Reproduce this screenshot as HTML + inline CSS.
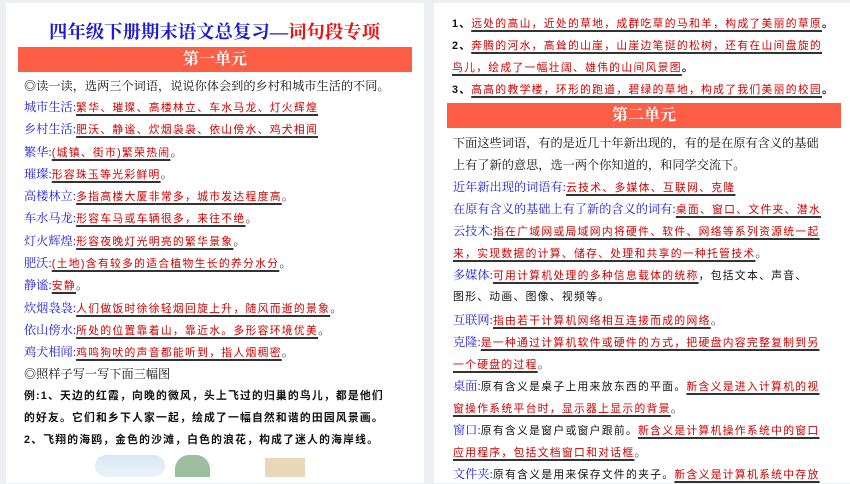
<!DOCTYPE html>
<html><head><meta charset="utf-8"><style>
*{margin:0;padding:0;box-sizing:border-box}
body{width:850px;height:477px;background:#eeeff3;position:relative;overflow:hidden;font-family:"Liberation Serif","Noto Serif CJK SC",serif;}
.pg{position:absolute;top:3px;background:#fff;height:480px}
.l{position:absolute;white-space:nowrap;font-size:12.2px;line-height:18px;color:#111}
.b{color:#1c1ce0}
.r{color:#d00000;font-family:"Liberation Sans","Noto Sans CJK SC",sans-serif;font-size:10.8px;letter-spacing:1.3px;text-decoration:underline;text-decoration-color:#333;text-underline-offset:3px;text-decoration-thickness:1.5px}
.k{font-family:"Liberation Sans","Noto Sans CJK SC",sans-serif;font-size:10.8px;letter-spacing:1.2px;font-weight:bold}
.n{font-family:"Liberation Sans","Noto Sans CJK SC",sans-serif;font-size:10.8px;letter-spacing:1.3px}
.bar{position:absolute;background:#ff5e46;color:#fff;font-weight:bold;font-size:16px;text-align:center;line-height:25px;height:25px}
</style></head><body>
<div class="pg" style="left:6px;width:418px"></div>
<div class="pg" style="left:434px;width:416px"></div>

<div class="l" style="left:49px;top:19px;font-size:18.4px;line-height:26px;font-weight:bold;color:#1a1ad8">四年级下册期末语文总复习—<span style="color:#f01010">词句段专项</span></div>
<div class="bar" style="left:18px;top:47px;width:394px">第一单元</div>
<div class="l" style="left:24px;top:77px">◎读一读，选两三个词语，说说你体会到的乡村和城市生活的不同。</div>
<div class="l" style="left:24px;top:98px"><span class="b">城市生活:</span><span class="r">繁华、璀璨、高楼林立、车水马龙、灯火辉煌</span></div>
<div class="l" style="left:24px;top:120px"><span class="b">乡村生活:</span><span class="r">肥沃、静谧、炊烟袅袅、依山傍水、鸡犬相闻</span></div>
<div class="l" style="left:24px;top:143px"><span class="b">繁华:</span><span class="r">(城镇、街市)繁荣热闹</span>。</div>
<div class="l" style="left:24px;top:165px"><span class="b">璀璨:</span><span class="r">形容珠玉等光彩鲜明</span>。</div>
<div class="l" style="left:24px;top:187px"><span class="b">高楼林立:</span><span class="r">多指高楼大厦非常多，城市发达程度高</span>。</div>
<div class="l" style="left:24px;top:209px"><span class="b">车水马龙:</span><span class="r">形容车马或车辆很多，来往不绝</span>。</div>
<div class="l" style="left:24px;top:232px"><span class="b">灯火辉煌:</span><span class="r">形容夜晚灯光明亮的繁华景象</span>。</div>
<div class="l" style="left:24px;top:254px"><span class="b">肥沃:</span><span class="r">(土地)含有较多的适合植物生长的养分水分</span>。</div>
<div class="l" style="left:24px;top:276px"><span class="b">静谧:</span><span class="r">安静</span>。</div>
<div class="l" style="left:24px;top:299px"><span class="b">炊烟袅袅:</span><span class="r">人们做饭时徐徐轻烟回旋上升，随风而逝的景象</span>。</div>
<div class="l" style="left:24px;top:321px"><span class="b">依山傍水:</span><span class="r">所处的位置靠着山，靠近水。多形容环境优美</span>。</div>
<div class="l" style="left:24px;top:343px"><span class="b">鸡犬相闻:</span><span class="r">鸡鸣狗吠的声音都能听到，指人烟稠密</span>。</div>
<div class="l" style="left:24px;top:365px">◎照样子写一写下面三幅图</div>
<div class="l k" style="left:24px;top:387px">例:1、天边的红霞，向晚的微风，头上飞过的归巢的鸟儿，都是他们</div>
<div class="l k" style="left:24px;top:409px">的好友。它们和乡下人家一起，绘成了一幅自然和谐的田园风景画。</div>
<div class="l k" style="left:24px;top:431px">2、飞翔的海鸥，金色的沙滩，白色的浪花，构成了迷人的海岸线。</div>
<div style="position:absolute;left:95px;top:455px;width:70px;height:22px;background:linear-gradient(#cfe0f0,#e8f0f8);border-radius:20px;opacity:.8"></div>
<div style="position:absolute;left:175px;top:455px;width:35px;height:22px;background:#9dbfa0;border-radius:14px 14px 0 0"></div>
<div style="position:absolute;left:265px;top:458px;width:40px;height:19px;background:#e8d8b8"></div>

<div class="l k" style="left:452px;top:15px">1、<span class="r" style="font-weight:normal">远处的高山，近处的草地，成群吃草的马和羊，构成了美丽的草原</span>。</div>
<div class="l k" style="left:452px;top:37px">2、<span class="r" style="font-weight:normal">奔腾的河水，高耸的山崖，山崖边笔挺的松树，还有在山间盘旋的</span></div>
<div class="l k" style="left:452px;top:59px"><span class="r" style="font-weight:normal">鸟儿，绘成了一幅壮阔、雄伟的山间风景图</span>。</div>
<div class="l k" style="left:452px;top:81px">3、<span class="r" style="font-weight:normal">高高的教学楼，环形的跑道，碧绿的草地，构成了我们美丽的校园</span>。</div>
<div class="bar" style="left:447px;top:103px;width:394px">第二单元</div>
<div class="l" style="left:453px;top:134px">下面这些词语，有的是近几十年新出现的，有的是在原有含义的基础</div>
<div class="l" style="left:453px;top:156px">上有了新的意思，选一两个你知道的，和同学交流下。</div>
<div class="l" style="left:453px;top:178px"><span class="b">近年新出现的词语有:</span><span class="r">云技术、多媒体、互联网、克隆</span></div>
<div class="l" style="left:453px;top:200px"><span class="b">在原有含义的基础上有了新的含义的词有:</span><span class="r">桌面、窗口、文件夹、潜水</span></div>
<div class="l" style="left:453px;top:222px"><span class="b">云技术:</span><span class="r">指在广域网或局域网内将硬件、软件、网络等系列资源统一起</span></div>
<div class="l" style="left:453px;top:244px"><span class="r">来，实现数据的计算、储存、处理和共享的一种托管技术</span>。</div>
<div class="l" style="left:453px;top:266px"><span class="b">多媒体:</span><span class="r">可用计算机处理的多种信息载体的统称</span><span class="n">，包括文本、声音、</span></div>
<div class="l n" style="left:453px;top:288px">图形、动画、图像、视频等。</div>
<div class="l" style="left:453px;top:311px"><span class="b">互联网:</span><span class="r">指由若干计算机网络相互连接而成的网络</span>。</div>
<div class="l" style="left:453px;top:333px"><span class="b">克隆:</span><span class="r">是一种通过计算机软件或硬件的方式，把硬盘内容完整复制到另</span></div>
<div class="l" style="left:453px;top:355px"><span class="r">一个硬盘的过程</span>。</div>
<div class="l" style="left:453px;top:377px"><span class="b">桌面:</span><span class="n">原有含义是桌子上用来放东西的平面。</span><span class="r">新含义是进入计算机的视</span></div>
<div class="l" style="left:453px;top:399px"><span class="r">窗操作系统平台时，显示器上显示的背景</span>。</div>
<div class="l" style="left:453px;top:421px"><span class="b">窗口:</span><span class="n">原有含义是窗户或窗户跟前。</span><span class="r">新含义是计算机操作系统中的窗口</span></div>
<div class="l" style="left:453px;top:443px"><span class="r">应用程序，包括文档窗口和对话框</span>。</div>
<div class="l" style="left:453px;top:465px"><span class="b">文件夹:</span><span class="n">原有含义是用来保存文件的夹子。</span><span class="r">新含义是计算机系统中存放</span></div>
</body></html>
